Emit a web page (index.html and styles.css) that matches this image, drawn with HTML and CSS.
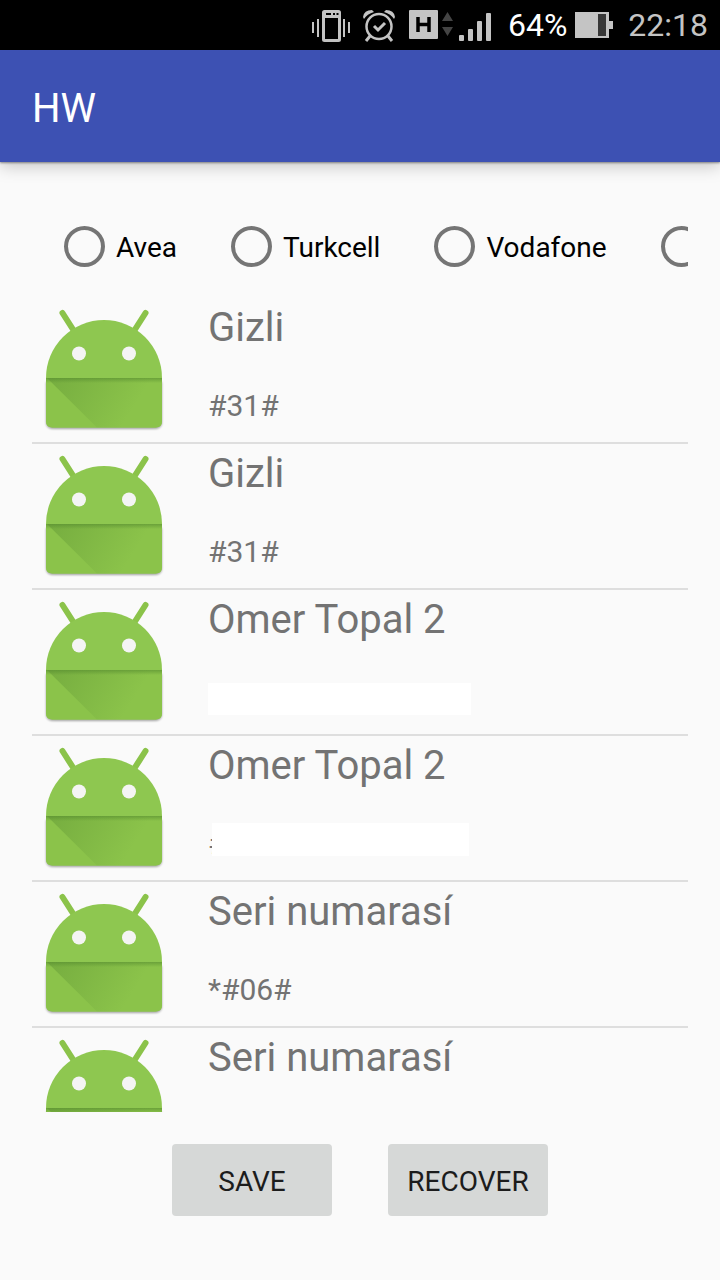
FILE: index.html
```html
<!DOCTYPE html>
<html lang="tr">
<head>
<meta charset="utf-8">
<meta name="viewport" content="width=device-width, initial-scale=1">
<title>HW</title>
<link rel="stylesheet" href="styles.css">
</head>
<body>
<svg class="defs" aria-hidden="true">
  <defs>
    <linearGradient id="body-shade" gradientUnits="userSpaceOnUse" x1="20" y1="80" x2="92" y2="125">
      <stop offset="0" stop-color="#558b2f" stop-opacity=".38"/>
      <stop offset="1" stop-color="#558b2f" stop-opacity="0"/>
    </linearGradient>
    <linearGradient id="seam-shade" x1="0" y1="0" x2="0" y2="1">
      <stop offset="0" stop-color="#558b2f" stop-opacity=".6"/>
      <stop offset="1" stop-color="#558b2f" stop-opacity="0"/>
    </linearGradient>
    <filter id="soft" x="-10%" y="-10%" width="120%" height="120%">
      <feGaussianBlur stdDeviation="1"/>
    </filter>
    <symbol id="robot" viewBox="0 0 144 144">
      <path d="M14 84h116v40q0 7-7 7H21q-7 0-7-7z" fill="#000" opacity=".35" filter="url(#soft)"/>
      <path d="M30.500 15L42 33M113.500 15L102 33" stroke="#8bc34a" stroke-width="6" stroke-linecap="round"/>
      <path d="M14 80a58 58 0 0 1 116 0v43q0 6.500-6.500 6.500h-103Q14 129.500 14 123z" fill="#8ec750"/>
      <path d="M14 80h116v43q0 6.500-6.500 6.500h-103Q14 129.500 14 123z" fill="#8bc34a"/>
      <path d="M15 80h115v49.500H65z" fill="url(#body-shade)"/>
      <path d="M14 80h116v5H14z" fill="url(#seam-shade)"/>
      <circle cx="47" cy="55.500" r="7" fill="#f4f4f4"/>
      <circle cx="97" cy="55.500" r="7" fill="#f4f4f4"/>
    </symbol>
  </defs>
</svg>
<div class="screen">
  <div class="status">
    <svg class="vibrate" viewBox="0 0 38 34" width="38" height="34" fill="none" stroke="#c4c4c4" role="img" aria-label="Vibrate">
      <path d="M1 14v11M6 11v18M32 11v18M37 14v11" stroke-width="2"/>
      <rect x="11.500" y="3.500" width="16" height="29" rx="1" stroke-width="3"/>
      <path d="M12 4h15v6H12z" fill="#c4c4c4" stroke="none"/>
      <path d="M14 6h5M21 6h2M24.500 6h2" stroke="#000" stroke-width="2"/>
    </svg>
    <svg class="alarm" viewBox="0 0 34 34" width="34" height="34" fill="none" stroke="#c4c4c4" role="img" aria-label="Alarm">
      <circle cx="17" cy="18.500" r="12.500" stroke-width="2.500"/>
      <path d="M8 28l-4 5M26 28l4 5M12 18l4 4 7-7" stroke-width="3"/>
      <path d="M1 9Q2 2 10 2L12 4Q5 6 2 11zM33 9Q32 2 24 2L22 4Q29 6 32 11z" fill="#c4c4c4" stroke="none"/>
    </svg>
    <svg class="network" viewBox="0 0 45 34" width="45" height="34" role="img" aria-label="HSPA">
      <rect y="2" width="29" height="29" rx="1" fill="#c4c4c4"/>
      <path d="M9 9v15M20 9v15M9 16.500h11" stroke="#000" stroke-width="3.500"/>
      <path d="M33 13l5.500-9L44 13zM33 19h11l-5.500 9z" fill="#444"/>
    </svg>
    <svg class="signal" viewBox="0 0 33 34" width="33" height="34" fill="#c4c4c4" role="img" aria-label="Signal">
      <rect y="27" width="5" height="6" rx="1"/><rect x="9" y="21" width="5" height="12" rx="1"/><rect x="18" y="13" width="5" height="20" rx="1"/><rect x="27" y="5" width="5" height="28" rx="1"/>
    </svg>
    <span class="charge">64%</span>
    <svg class="battery" viewBox="0 0 38 34" width="38" height="34" role="img" aria-label="Battery">
      <path d="M0 4h34v9h4v8h-4v9H0z" fill="#c4c4c4"/><path d="M23 6h8v22h-8z" fill="#383838"/>
    </svg>
    <time class="clock">22:18</time>
  </div>
  <header class="bar"><h1 class="heading">HW</h1></header>
  <main class="content">
    <form class="operators">
      <label class="operator"><input class="radio" type="radio" name="operator"><span class="label">Avea</span></label>
      <label class="operator"><input class="radio" type="radio" name="operator"><span class="label">Turkcell</span></label>
      <label class="operator"><input class="radio" type="radio" name="operator"><span class="label">Vodafone</span></label>
      <label class="operator"><input class="radio" type="radio" name="operator" aria-label="Other"></label>
    </form>
    <ul class="contacts">
      <li class="contact"><svg class="photo"><use href="#robot"/></svg><div class="details"><h2 class="name">Gizli</h2><p class="number">#31#</p></div></li>
      <li class="contact"><svg class="photo"><use href="#robot"/></svg><div class="details"><h2 class="name">Gizli</h2><p class="number">#31#</p></div></li>
      <li class="contact"><svg class="photo"><use href="#robot"/></svg><div class="details"><h2 class="name">Omer Topal 2</h2><p class="number"><span class="mask"></span></p></div></li>
      <li class="contact"><svg class="photo"><use href="#robot"/></svg><div class="details"><h2 class="name">Omer Topal 2</h2><p class="number">#<span class="mask mask-partial"></span></p></div></li>
      <li class="contact"><svg class="photo"><use href="#robot"/></svg><div class="details"><h2 class="name">Seri numarasí</h2><p class="number">*#06#</p></div></li>
      <li class="contact"><svg class="photo"><use href="#robot"/></svg><div class="details"><h2 class="name">Seri numarasí</h2></div></li>
    </ul>
    <div class="actions">
      <button class="action" type="button">SAVE</button>
      <button class="action" type="button">RECOVER</button>
    </div>
  </main>
</div>
</body>
</html>
```
FILE: styles.css
```css
* { box-sizing: border-box; }
body {
  margin: 0;
  background: #fafafa;
  font-family: Roboto, "Noto Sans", sans-serif;
}
.defs { position: absolute; width: 0; height: 0; }
.screen { display: flex; flex-direction: column; height: 100vh; }
.status {
  display: flex;
  flex: none;
  align-items: center;
  justify-content: flex-end;
  height: 50px;
  padding-right: 12px;
  background: #000;
  color: #fff;
  font-size: 32px;
  line-height: 40px;
}
.status svg { flex: none; }
.alarm { margin-left: 12px; }
.network { margin-left: 13px; }
.signal { margin-left: 5px; }
.charge { margin-left: 16px; }
.battery { margin-left: 8px; }
.clock { margin-left: 15px; color: #c4c4c4; }
.bar {
  display: flex;
  flex: none;
  align-items: center;
  height: 112px;
  padding: 6px 32px 0;
  background: #3d51b3;
  box-shadow: 0 1px 2px rgba(0, 0, 0, .4), 0 4px 16px rgba(0, 0, 0, .22);
}
.heading {
  margin: 0;
  color: #fff;
  font-size: 40px;
  font-weight: 400;
  line-height: 48px;
}
.content {
  display: flex;
  flex: 1;
  flex-direction: column;
  min-height: 0;
  padding: 32px 32px 64px;
}
.operators {
  display: flex;
  flex: none;
  gap: 54px;
  align-items: center;
  height: 104px;
  padding-left: 32px;
  overflow: hidden;
}
.operator {
  display: flex;
  flex: none;
  gap: 11px;
  align-items: center;
  color: #000;
  font-size: 28px;
  line-height: 36px;
}
.label { padding-top: 4px; }
.radio {
  flex: none;
  width: 41px;
  height: 41px;
  margin: 0;
  appearance: none;
  border: 4px solid #757575;
  border-radius: 50%;
}
.radio:checked { background: radial-gradient(#3d51b3 50%, transparent 54%); }
.contacts {
  flex: 1;
  min-height: 0;
  margin: 0;
  padding: 0;
  overflow: hidden;
  list-style: none;
}
.contact {
  display: flex;
  gap: 32px;
  height: 146px;
  border-bottom: 2px solid #dedede;
}
.photo { flex: none; width: 144px; height: 144px; }
.details {
  display: flex;
  flex: 1;
  flex-direction: column;
  justify-content: space-between;
  padding: 6px 0 18px;
}
.name {
  margin: 0;
  color: #737373;
  font-size: 40px;
  font-weight: 400;
  line-height: 48px;
}
.number {
  position: relative;
  height: 36px;
  margin: 0;
  color: #737373;
  font-size: 30px;
  line-height: 36px;
}
.mask {
  position: absolute;
  top: 3px;
  left: 0;
  width: 263px;
  height: 32px;
  background: #fff;
}
.mask-partial { top: -3px; left: 4px; width: 257px; height: 33px; }
.actions {
  display: flex;
  flex: none;
  gap: 56px;
  justify-content: center;
  padding-top: 32px;
}
.action {
  width: 160px;
  height: 72px;
  padding: 4px 0 0;
  border: 0;
  border-radius: 4px;
  background: #d6d8d7;
  color: #1c1c1c;
  font-family: inherit;
  font-size: 28px;
  line-height: 36px;
}
```
